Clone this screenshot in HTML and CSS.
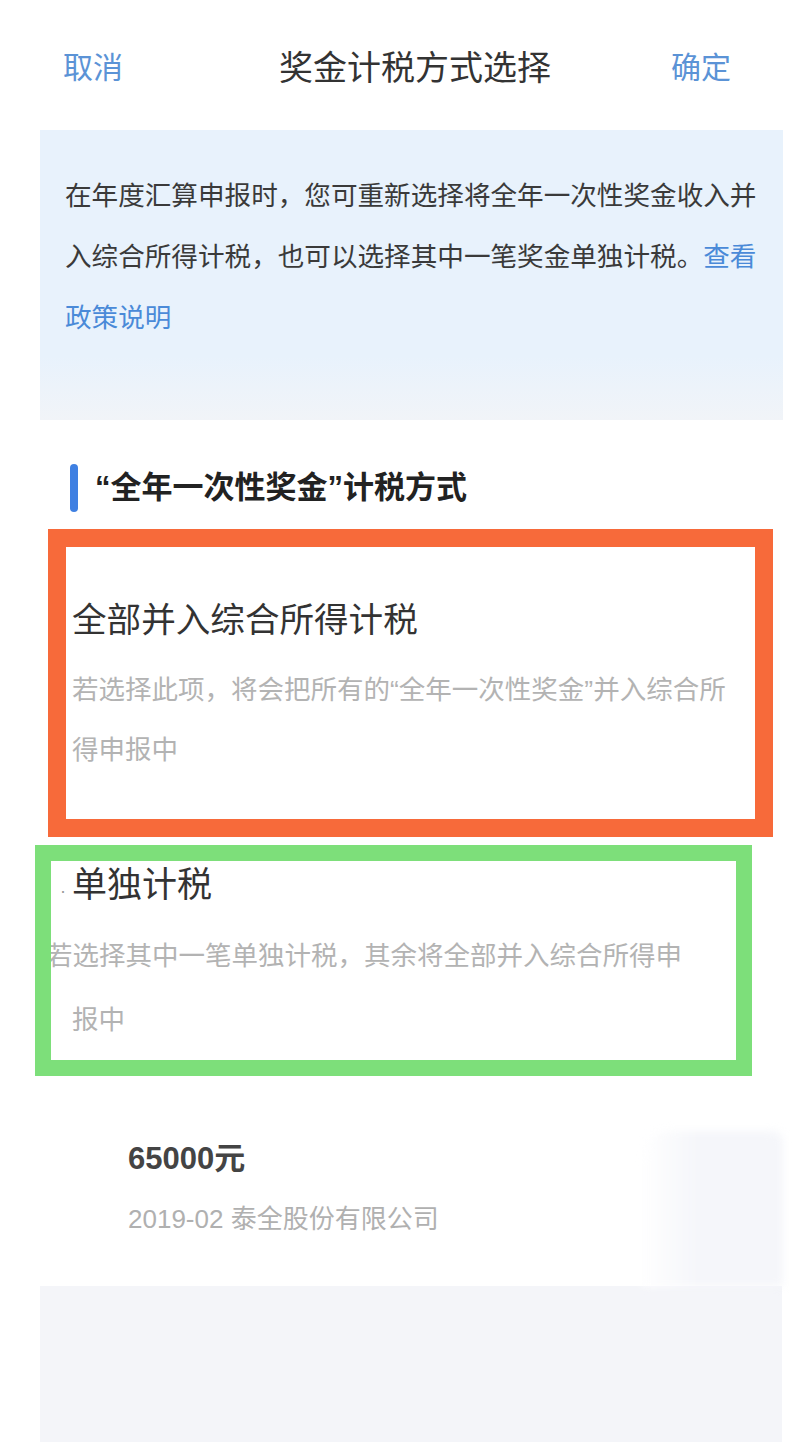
FILE: index.html
```html
<!DOCTYPE html>
<html lang="zh-CN">

<head>
    <meta charset="UTF-8">
    <meta name="viewport" content="width=device-width, initial-scale=1.0">
    <title>奖金计税方式选择</title>
    <link rel="stylesheet" href="styles.css">
</head>

<body>
    <div class="page">
        <header class="nav">
            <span class="nav-btn">取消</span>
            <h1 class="nav-title">奖金计税方式选择</h1>
            <span class="nav-btn nav-ok">确定</span>
        </header>

        <div class="notice">
            <p>在年度汇算申报时，您可重新选择将全年一次性奖金收入并入综合所得计税，也可以选择其中一笔奖金单独计税。<a class="link">查看政策说明</a></p>
        </div>

        <div class="section-head">
            <span class="bar"></span>
            <h2>“全年一次性奖金”计税方式</h2>
        </div>

        <!-- option 1 -->
        <div class="option option-all">
            <h3>全部并入综合所得计税</h3>
            <p>若选择此项，将会把所有的“全年一次性奖金”并入综合所得申报中</p>
        </div>

        <!-- option 2 -->
        <div class="option option-one">
            <h3><span class="cut">·</span>单独计税</h3>
            <p>若选择其中一笔单独计税，其余将全部并入综合所得申报中</p>
        </div>

        <div class="bonus-row">
            <div class="bonus-info">
                <div class="amount">65000元</div>
                <div class="date">2019-02 泰全股份有限公司</div>
            </div>
            <div class="ghost"></div>
        </div>

        <div class="bottom-gray"></div>
    </div>
</body>

</html>
```

FILE: styles.css
```css
body {
    margin: 0;
    background: #ffffff;
    font-family: "Liberation Sans", "Noto Sans CJK SC", sans-serif;
    color: #333;
}

.page {
    width: 795px;
}

.nav {
    display: flex;
    align-items: flex-start;
    height: 130px;
    padding: 48px 0 0 63px;
    box-sizing: border-box;
}

.nav-btn {
    font-size: 30px;
    line-height: 40px;
    color: #5b93d6;
}

.nav-title {
    margin: 0 0 0 156px;
    font-size: 34px;
    line-height: 40px;
    font-weight: normal;
    color: #333;
}

.nav-ok {
    margin-left: 120px;
}

.notice {
    margin-left: 40px;
    width: 743px;
    height: 290px;
    padding: 36px 20px 0 25px;
    box-sizing: border-box;
    background: linear-gradient(to bottom, #e8f2fc 78%, #f1f4f8);
}

.notice p {
    margin: 0;
    font-size: 26.6px;
    line-height: 61px;
    color: #3a3a3a;
}

.link {
    color: #4a8ad8;
}

.section-head {
    display: flex;
    align-items: center;
    gap: 17px;
    margin: 0 0 17px 70px;
    padding-top: 44px;
}

.bar {
    width: 8px;
    height: 48px;
    border-radius: 4px;
    background: #3f80e2;
}

.section-head h2 {
    margin: 0;
    font-size: 31px;
    line-height: 48px;
    font-weight: bold;
    color: #222;
}

.option {
    background: #fff;
    box-sizing: border-box;
}

.option h3 {
    margin: 0;
    font-size: 34.6px;
    line-height: 46px;
    font-weight: normal;
    color: #333;
}

.option p {
    margin: 0;
    font-size: 26.5px;
    color: #b3b3b3;
}

.option-all {
    margin-left: 48px;
    width: 725px;
    border: 18px solid #f76a3a;
    padding: 50px 13px 39px 6px;
}

.option-all p {
    margin-top: 17px;
    line-height: 60px;
}

.option-one {
    margin: 8px 0 0 35px;
    width: 717px;
    border: 16px solid #7ddf7a;
    padding: 1px 36px 8px 21px;
    overflow: hidden;
}

.option-one h3 {
    font-size: 35px;
}

.option-one p {
    margin-top: 10px;
    line-height: 64px;
    text-indent: -26px;
}

.cut {
    display: inline-block;
    width: 12px;
    margin-left: -12px;
    font-size: 18px;
    color: #999;
}

.bonus-row {
    display: flex;
    margin-left: 40px;
    width: 743px;
    height: 210px;
    padding: 61px 0 47px 88px;
    box-sizing: border-box;
}

.amount {
    font-size: 31px;
    line-height: 44px;
    font-weight: bold;
    color: #444;
}

.date {
    margin-top: 18px;
    font-size: 26px;
    line-height: 40px;
    color: #b0b0b0;
}

.ghost {
    align-self: flex-end;
    width: 142px;
    height: 155px;
    margin: 0 0 -47px auto;
    border-radius: 30px 10px 0 0;
    background: linear-gradient(to right, #ffffff, #f5f6fa 40%);
    filter: blur(4px);
}

.bottom-gray {
    margin-left: 40px;
    width: 742px;
    height: 162px;
    background: #f4f5f9;
}
```
